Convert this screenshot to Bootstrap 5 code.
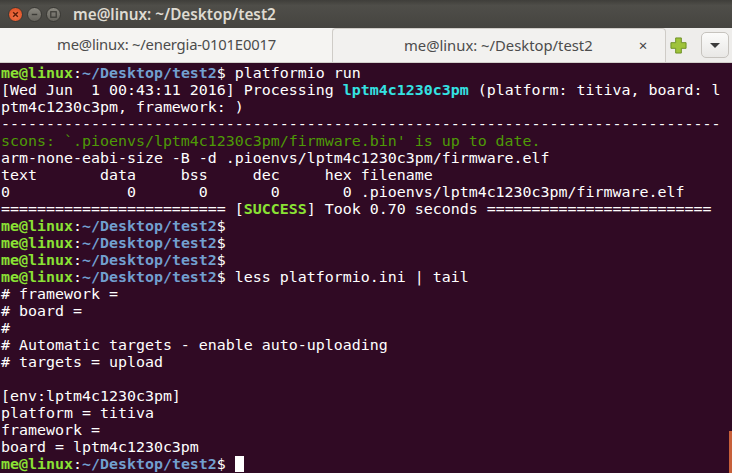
<!DOCTYPE html>
<html lang="en">
<head>
<meta charset="utf-8">
<title>me@linux: ~/Desktop/test2</title>
<link rel="stylesheet" href="https://cdn.jsdelivr.net/npm/bootstrap@5.3.0/dist/css/bootstrap.min.css">
<style>
html,body{margin:0;height:473px;overflow:hidden;background:#300a24}
.win{width:732px;height:473px;position:relative}
.titlebar{height:28px;background:linear-gradient(#3f3e3a,#4f4e49 20%,#454440);padding-left:8px;font-family:"Noto Sans","Open Sans",sans-serif;font-size:15.3px;font-weight:600;color:#dfdbd2}
.wbtns{width:65px;gap:4px}
.wbtn{width:15px;height:15px;border-radius:50%;background:linear-gradient(#8a8880,#65635c);border:1px solid #3a3935;display:flex;align-items:center;justify-content:center;margin-top:1px}
.wbtn.closeb{background:radial-gradient(circle at 50% 60%,#f3764a,#d9481c)}
.ttl{line-height:28px}
.tabbar{height:35px;background:#eeedeb;border-bottom:1px solid #d2cfca;font-family:"Noto Sans","Open Sans",sans-serif;font-size:14.8px;color:#4c4c4c}
.tabitem{height:34px;line-height:33px}
.tab1{width:332px;padding-left:57px;background:#f5f4f2;letter-spacing:-.2px}
.tab2{width:334px;background:#f2f1ef;border:1px solid #cfccc7;border-bottom:0;border-radius:4px 4px 0 0;padding-left:71px}
.xmark{margin-left:46px;font-size:15px;color:#444}
.plusb{width:29px;padding-left:4px}
.menub{width:28px;height:26px;margin-top:4px;margin-left:6px;background:linear-gradient(#fbfbfa,#e9e8e6);border:1px solid #c6c3be;border-radius:5px}
.caret-dn{width:0;height:0;border-left:5.5px solid transparent;border-right:5.5px solid transparent;border-top:5.5px solid #3c3c3c}
.term{margin:0;height:410px;background:#300a24;color:#fff;padding:2px 0 0 1px;font-family:"DejaVu Sans Mono",monospace;font-size:14.95px;line-height:17px;overflow:hidden;white-space:pre}
.pg{color:#8ae234;font-weight:700}
.pb{color:#729fcf;font-weight:700}
.cy{color:#34e2e2;font-weight:700}
.gr{color:#4e9a06}
.cur{display:inline-block;width:9px;height:16px;background:#fff;vertical-align:-3px}
.sbar{position:absolute;right:0;top:431px;width:3px;height:42px;background:#c7603a}
</style>
</head>
<body>
<div class="win">
  <div class="titlebar d-flex align-items-center">
    <div class="wbtns d-flex">
      <div class="wbtn closeb"><svg width="7" height="7" viewBox="0 0 9 9"><path d="M1.5 1.5l6 6M7.5 1.5l-6 6" stroke="#5a1c08" stroke-width="1.8"/></svg></div>
      <div class="wbtn"><svg width="7" height="7" viewBox="0 0 9 9"><path d="M1 4.5h7" stroke="#3c3b37" stroke-width="1.8"/></svg></div>
      <div class="wbtn"><svg width="7" height="7" viewBox="0 0 9 9"><rect x="1" y="1" width="7" height="7" fill="none" stroke="#3c3b37" stroke-width="1.6"/></svg></div>
    </div>
    <div class="ttl">me@linux: ~/Desktop/test2</div>
  </div>
  <div class="tabbar d-flex">
    <div class="tabitem tab1">me@linux: ~/energia-0101E0017</div>
    <div class="tabitem tab2 d-flex"><span>me@linux: ~/Desktop/test2</span><span class="xmark">×</span></div>
    <div class="plusb d-flex align-items-center"><svg width="17" height="17" viewBox="0 0 18 18"><path d="M6 1h6v5h5v6h-5v5H6v-5H1V6h5z" fill="#9fc33b" stroke="#6b8e23" stroke-width="1"/></svg></div>
    <div class="menub d-flex align-items-center justify-content-center"><span class="caret-dn"></span></div>
  </div>
<pre class="term"><span class="pg">me@linux</span>:<span class="pb">~/Desktop/test2</span>$ platformio run
[Wed Jun  1 00:43:11 2016] Processing <span class="cy">lptm4c1230c3pm</span> (platform: titiva, board: l
ptm4c1230c3pm, framework: )
--------------------------------------------------------------------------------
<span class="gr">scons: `.pioenvs/lptm4c1230c3pm/firmware.bin' is up to date.</span>
arm-none-eabi-size -B -d .pioenvs/lptm4c1230c3pm/firmware.elf
text       data     bss     dec     hex filename
0             0       0       0       0 .pioenvs/lptm4c1230c3pm/firmware.elf
========================= [<span class="pg">SUCCESS</span>] Took 0.70 seconds =========================
<span class="pg">me@linux</span>:<span class="pb">~/Desktop/test2</span>$
<span class="pg">me@linux</span>:<span class="pb">~/Desktop/test2</span>$
<span class="pg">me@linux</span>:<span class="pb">~/Desktop/test2</span>$
<span class="pg">me@linux</span>:<span class="pb">~/Desktop/test2</span>$ less platformio.ini | tail
# framework =
# board =
#
# Automatic targets - enable auto-uploading
# targets = upload

[env:lptm4c1230c3pm]
platform = titiva
framework =
board = lptm4c1230c3pm
<span class="pg">me@linux</span>:<span class="pb">~/Desktop/test2</span>$ <span class="cur"></span></pre>
  <div class="sbar"></div>
</div>
<script src="https://cdn.jsdelivr.net/npm/bootstrap@5.3.0/dist/js/bootstrap.bundle.min.js"></script>
</body>
</html>
